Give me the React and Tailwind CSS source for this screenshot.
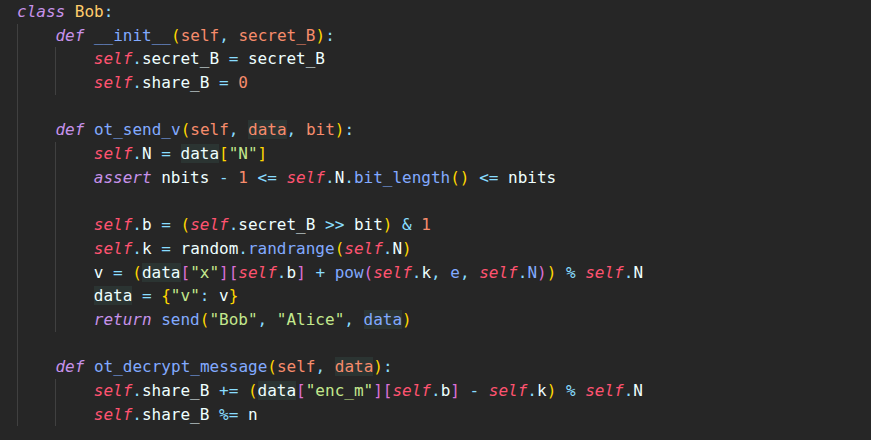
import React from 'react';

// token styles
const K = 'text-[#c792ea] italic';
const F = 'text-[#82aaff]';
const S = 'text-[#ff5370] italic';
const P = 'text-[#f78c6c]';
const O = 'text-[#89ddff]';
const T = 'text-[#c3e88d]';
const W = 'text-[#eeffff]';
const Y = 'text-[#ffcb6b]';
const B1 = 'text-[#ffd700]';
const B2 = 'text-[#da70d6]';
const B3 = 'text-[#179fff]';
const HL = 'bg-[#2b3432]';

const self = (attr, attrCls = W) => [
  ['self', S],
  ['.', O],
  [attr, attrCls],
];

const Line = ({ tokens = [] }) => (
  <div className="h-[23.7px] leading-[23.7px] whitespace-pre">
    {tokens.length === 0 ? ' ' : tokens.map(([t, c], i) => (
      <span key={i} className={c}>{t}</span>
    ))}
  </div>
);

const Block = ({ children }) => (
  <div className="border-l border-[#404040] pl-[37.4px]">{children}</div>
);

const init = [
  [['def', K], [' '], ['__init__', F], ['(', B1], ['self', P], [', ', O], ['secret_B', P], [')', B1], [':', O]],
];
const initBody = [
  [...self('secret_B'), [' = ', O], ['secret_B', W]],
  [...self('share_B'), [' = ', O], ['0', P]],
];

const send = [
  [['def', K], [' '], ['ot_send_v', F], ['(', B1], ['self', P], [', ', O], ['data', P + ' ' + HL], [', ', O], ['bit', P], [')', B1], [':', O]],
];
const sendBody = [
  [...self('N'), [' = ', O], ['data', W + ' ' + HL], ['[', B1], ['"N"', T], [']', B1]],
  [['assert', K], [' nbits ', W], ['- ', O], ['1', P], [' <= ', O], ...self('N'), ['.', O], ['bit_length', F], ['()', B1], [' <= ', O], ['nbits', W]],
  [],
  [...self('b'), [' = ', O], ['(', B1], ...self('secret_B'), [' >> ', O], ['bit', W], [')', B1], [' & ', O], ['1', P]],
  [...self('k'), [' = ', O], ['random', W], ['.', O], ['randrange', F], ['(', B1], ...self('N'), [')', B1]],
  [['v', W], [' = ', O], ['(', B1], ['data', W + ' ' + HL], ['[', B2], ['"x"', T], [']', B2], ['[', B2], ...self('b'), [']', B2], [' + ', O], ['pow', F], ['(', B2], ...self('k'), [', ', O], ['e', F], [', ', O], ...self('N', F), [')', B2], [')', B1], [' % ', O], ...self('N')],
  [['data', W + ' ' + HL], [' = ', O], ['{', B1], ['"v"', T], [': ', O], ['v', W], ['}', B1]],
  [['return', K], [' '], ['send', F], ['(', B1], ['"Bob"', T], [', ', O], ['"Alice"', T], [', ', O], ['data', F + ' ' + HL], [')', B1]],
];

const decrypt = [
  [['def', K], [' '], ['ot_decrypt_message', F], ['(', B1], ['self', P], [', ', O], ['data', P + ' ' + HL], [')', B1], [':', O]],
];
const decryptBody = [
  [...self('share_B'), [' += ', O], ['(', B1], ['data', W + ' ' + HL], ['[', B2], ['"enc_m"', T], [']', B2], ['[', B2], ...self('b'), [']', B2], [' - ', O], ...self('k'), [')', B1], [' % ', O], ...self('N')],
  [...self('share_B'), [' %= ', O], ['n', W]],
];

const lines = rows => rows.map((r, i) => <Line key={i} tokens={r} />);

export default function App() {
  return (
    <div className="w-[871px] h-[440px] bg-[#262626] overflow-hidden text-[#eeffff] text-[16px] font-['DejaVu_Sans_Mono',monospace]">
      <div className="pl-[17px]">
        <Line tokens={[['class', K], [' '], ['Bob', Y], [':', O]]} />
        <Block>
          {lines(init)}
          <Block>{lines(initBody)}</Block>
          <Line />
          {lines(send)}
          <Block>{lines(sendBody)}</Block>
          <Line />
          {lines(decrypt)}
          <Block>{lines(decryptBody)}</Block>
        </Block>
      </div>
    </div>
  );
}
